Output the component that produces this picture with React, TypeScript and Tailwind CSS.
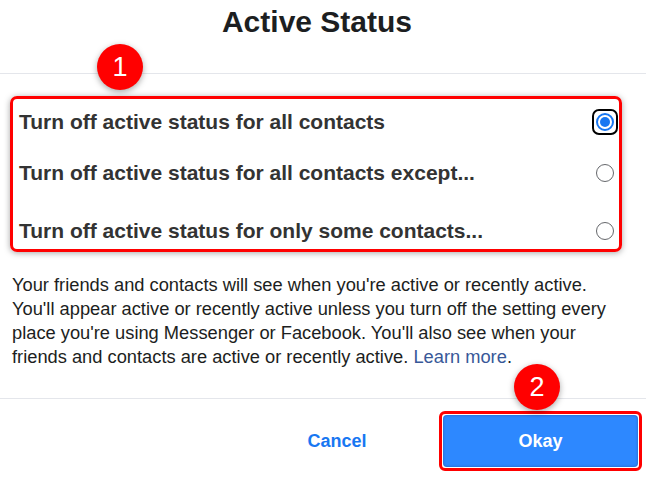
import React from 'react';

const Radio: React.FC<{ checked?: boolean }> = ({ checked }) => {
  return (
    <div className="w-[26px] h-[26px] flex items-center justify-center shrink-0">
      {checked ? (
        <div className="w-[26px] h-[26px] rounded-[7px] border-2 border-black flex items-center justify-center">
          <div className="w-[18px] h-[18px] rounded-full border-2 border-[#1877f2] flex items-center justify-center">
            <div className="w-[10px] h-[10px] rounded-full bg-[#1877f2]"></div>
          </div>
        </div>
      ) : (
        <div className="w-[18px] h-[18px] rounded-full border-[1.5px] border-[#65676b]"></div>
      )}
    </div>
  );
};

const Badge: React.FC<{ n: number; className: string }> = ({ n, className }) => (
  <div
    className={
      'absolute w-[46px] h-[46px] rounded-full bg-[#ff0000] text-white flex items-center justify-center text-[27px] font-medium shadow-[0_2px_6px_rgba(0,0,0,0.35)] ' +
      className
    }
  >
    {n}
  </div>
);

const App: React.FC = () => {
  return (
    <div className="relative w-[646px] h-[477px] bg-white overflow-hidden font-['Liberation_Sans',Arial,sans-serif] text-[#1c1e21]">
      <div className="h-[74px] border-b border-[#e4e6eb]">
        <h1 className="pt-[7px] pr-[12px] text-center text-[30px] leading-[30px] font-bold">Active Status</h1>
      </div>

      <div className="mt-[22px] ml-[10px] w-[612px] border-[3px] border-[#ff0000] rounded-[7px] shadow-[0_1px_6px_rgba(0,0,0,0.35)] pl-[6px] pr-[1px] pt-[10px] pb-[5px] text-[#333333]">
        <div className="flex items-center justify-between h-[26px]">
          <span className="text-[21px] font-bold">Turn off active status for all contacts</span>
          <Radio checked />
        </div>
        <div className="flex items-center justify-between h-[26px] mt-[25px]">
          <span className="text-[21px] font-bold">Turn off active status for all contacts except...</span>
          <Radio />
        </div>
        <div className="flex items-center justify-between h-[26px] mt-[32px]">
          <span className="text-[21px] font-bold">Turn off active status for only some contacts...</span>
          <Radio />
        </div>
      </div>

      <p className="mt-[21px] pl-[12px] pr-[28px] text-[18.3px] leading-[24px]">
        Your friends and contacts will see when you're active or recently active. You'll appear active or recently
        active unless you turn off the setting every place you're using Messenger or Facebook. You'll also see when
        your friends and contacts are active or recently active. <span className="text-[#385898]">Learn more</span>.
      </p>

      <div className="mt-[29px] border-t border-[#e4e6eb] flex justify-end items-center pt-[12px] pr-[4px] gap-[5px]">
        <button className="w-[194px] h-[60px] text-[18px] font-bold text-[#1877f2]">Cancel</button>
        <div className="w-[203px] h-[60px] border-[3px] border-[#ff0000] rounded-[6px] p-[1px] bg-white">
          <button className="w-full h-full rounded-[4px] bg-[#2d88ff] text-white text-[18px] font-bold shadow-[inset_0_0_3px_rgba(0,0,0,0.3)]">
            Okay
          </button>
        </div>
      </div>

      <Badge n={1} className="left-[97px] top-[44px]" />
      <Badge n={2} className="left-[514px] top-[364px]" />
    </div>
  );
};

export default App;
